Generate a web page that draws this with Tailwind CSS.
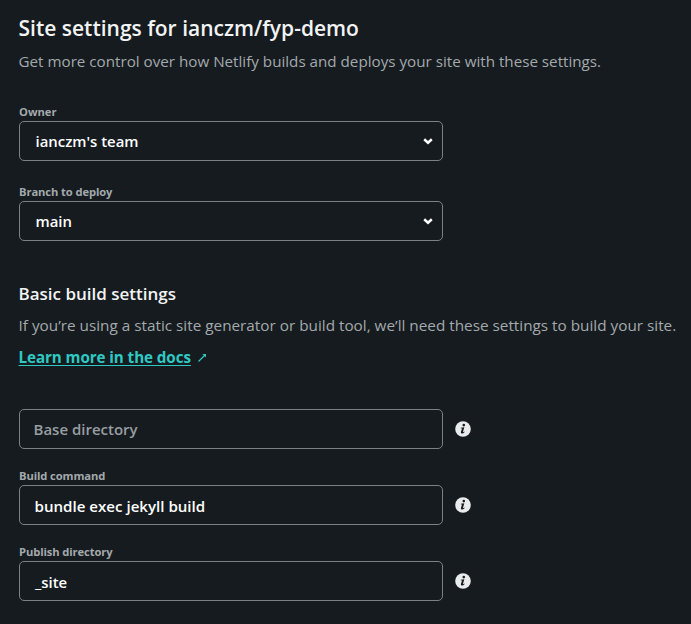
<!DOCTYPE html>
<html lang="en">
<head>
<meta charset="utf-8">
<title>Site settings</title>
<script src="https://cdn.jsdelivr.net/npm/@tailwindcss/browser@4"></script>
</head>
<body class="h-[624px] overflow-hidden bg-[#161b1f] pl-[19px] font-['Open_Sans','Noto_Sans',sans-serif] text-[#a3a9ac]">
<header class="pt-3">
<h1 class="-ml-[0.5px] h-8 text-[21px] leading-8 font-semibold whitespace-nowrap text-[#f1f3f4]">Site settings for ianczm/fyp-demo</h1>
<p class="mt-[3px] -ml-[0.5px] h-7 text-[15.2px] leading-7 whitespace-nowrap">Get more control over how Netlify builds and deploys your site with these settings.</p>
</header>

<section class="mt-7 w-[424px]">
<label class="block h-[18px] text-[11.2px] leading-[18px] font-bold">Owner</label>
<div class="flex h-10 items-center justify-between rounded-[5px] border border-[#7b8286] pr-[9px] pl-[15.5px] text-[14.9px] font-semibold text-white">
<span>ianczm's team</span>
<svg class="h-[7px] w-[10px]" viewBox="0 0 10 7" fill="none" stroke="currentColor" stroke-width="2.5"><path d="M1.2 1.3L5 4.7L8.8 1.3"/></svg>
</div>
<label class="mt-[22px] block h-[18px] text-[11.2px] leading-[18px] font-bold tracking-[-0.1px]">Branch to deploy</label>
<div class="flex h-10 items-center justify-between rounded-[5px] border border-[#7b8286] pr-[9px] pl-[15.5px] text-[14.9px] font-semibold text-white">
<span>main</span>
<svg class="h-[7px] w-[10px]" viewBox="0 0 10 7" fill="none" stroke="currentColor" stroke-width="2.5"><path d="M1.2 1.3L5 4.7L8.8 1.3"/></svg>
</div>
</section>

<section class="mt-[41px] -ml-[0.5px] whitespace-nowrap">
<h2 class="h-6 text-[17px] leading-6 font-semibold text-[#f1f3f4]">Basic build settings</h2>
<p class="mt-[7px] h-6 text-[15.3px] leading-6">If you’re using a static site generator or build tool, we’ll need these settings to build your site.</p>
<div class="mt-2 flex h-6 items-center gap-[7px] text-[15.2px] leading-6 font-bold text-[#2fc9c4]">
<a class="tracking-[-0.08px] underline decoration-1 underline-offset-2" href="#">Learn more in the docs</a>
<svg class="h-[9px] w-[9px]" viewBox="0 0 9 9" fill="none" stroke="currentColor" stroke-width="1.3"><path d="M.5 8.5L7.5 1.5"/><path d="M4.4 1H8V4.6Z" fill="currentColor" stroke="none"/></svg>
</div>
</section>

<section class="mt-10">
<div class="flex items-center gap-3">
<div class="flex h-10 w-[424px] items-center rounded-[5px] border border-[#7b8286] pl-[13.5px] text-[15px] font-semibold text-[#989ea2]">Base directory</div>
<svg class="size-4" viewBox="0 0 16 16" fill="#e9ebed"><circle cx="8" cy="8" r="7.8"/><g fill="#161b1f"><circle cx="8.8" cy="4.1" r="1.3"/><path d="M5.8 6.7L9.3 6.3L8 10.8Q7.9 11.4 9.5 10.4L9.7 10.9Q8.1 12.7 6.6 12.5Q5.5 12.3 6 10.8L7 7.4L5.7 7.2Z"/></g></svg>
</div>
<label class="mt-[18px] block h-[18px] text-[11.2px] leading-[18px] font-bold tracking-[-0.1px]">Build command</label>
<div class="flex items-center gap-3">
<div class="flex h-10 w-[424px] items-center rounded-[5px] border border-[#7b8286] pt-0.5 pl-[14.5px] text-[15.1px] font-semibold text-white">bundle exec jekyll build</div>
<svg class="size-4" viewBox="0 0 16 16" fill="#e9ebed"><circle cx="8" cy="8" r="7.8"/><g fill="#161b1f"><circle cx="8.8" cy="4.1" r="1.3"/><path d="M5.8 6.7L9.3 6.3L8 10.8Q7.9 11.4 9.5 10.4L9.7 10.9Q8.1 12.7 6.6 12.5Q5.5 12.3 6 10.8L7 7.4L5.7 7.2Z"/></g></svg>
</div>
<label class="mt-[18px] block h-[18px] text-[11.2px] leading-[18px] font-bold tracking-[-0.1px]">Publish directory</label>
<div class="flex items-center gap-3">
<div class="flex h-10 w-[424px] items-center rounded-[5px] border border-[#7b8286] pt-0.5 pl-[15px] text-[14.9px] font-semibold text-white">_site</div>
<svg class="size-4" viewBox="0 0 16 16" fill="#e9ebed"><circle cx="8" cy="8" r="7.8"/><g fill="#161b1f"><circle cx="8.8" cy="4.1" r="1.3"/><path d="M5.8 6.7L9.3 6.3L8 10.8Q7.9 11.4 9.5 10.4L9.7 10.9Q8.1 12.7 6.6 12.5Q5.5 12.3 6 10.8L7 7.4L5.7 7.2Z"/></g></svg>
</div>
</section>
</body>
</html>
